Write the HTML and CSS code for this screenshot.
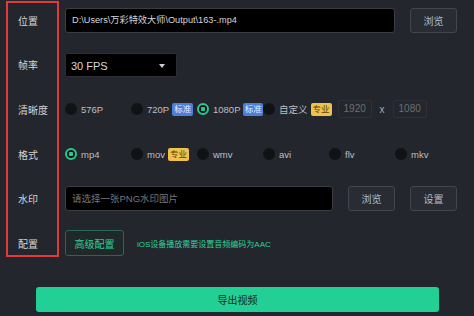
FILE: index.html
```html
<!doctype html>
<html lang="zh">
<head>
  <meta charset="utf-8">
  <title>导出视频</title>
<link rel="stylesheet" href="styles.css">
</head>

<body>

<div id="panel">

  <div class="mark"></div>

  <div id="form">

    <div class="row">
      <div class="label">位置</div>
      <div class="input path">D:\Users\万彩特效大师\Output\163-.mp4</div>
      <button class="btn">浏览</button>
    </div>

    <div class="row">
      <div class="label">帧率</div>
      <div class="select">30 FPS <span class="caret"></span></div>
    </div>

    <div class="row">
      <div class="label">清晰度</div>
      <div class="opt"><span class="radio"></span>576P</div>
      <div class="opt"><span class="radio"></span>720P <span class="tag blue">标准</span></div>
      <div class="opt"><span class="radio on"></span>1080P <span class="tag blue">标准</span></div>
      <div class="opt custom"><span class="radio"></span>自定义 <span class="tag gold">专业</span></div>
      <div class="size">1920</div>
      <span class="times">x</span>
      <div class="size">1080</div>
    </div>

    <div class="row">
      <div class="label">格式</div>
      <div class="opt"><span class="radio on"></span>mp4</div>
      <div class="opt"><span class="radio"></span>mov <span class="tag gold">专业</span></div>
      <div class="opt"><span class="radio"></span>wmv</div>
      <div class="opt"><span class="radio"></span>avi</div>
      <div class="opt"><span class="radio"></span>flv</div>
      <div class="opt"><span class="radio"></span>mkv</div>
    </div>

    <div class="row">
      <div class="label">水印</div>
      <div class="input wm placeholder">请选择一张PNG水印图片</div>
      <button class="btn">浏览</button>
      <button class="btn">设置</button>
    </div>

    <div class="row">
      <div class="label">配置</div>
      <button class="btn-adv">高级配置</button>
      <span class="note">iOS设备播放需要设置音频编码为AAC</span>
    </div>

  </div><!-- /#form -->

  <button class="export">导出视频</button>

</div>

</body>
</html>
```

FILE: styles.css
```css
html {
  box-sizing: border-box;
}
*, *:before, *:after {
  box-sizing: inherit;
}

body {
  margin: 0;
  padding: 0;
  width: 474px;
  height: 316px;
  overflow: hidden;
  background-color: #24262d;
  color: #bdbec2;
  font-family: 'Liberation Sans', 'Noto Sans CJK SC', sans-serif;
  font-size: 10px;
}

#panel {
  position: relative;
  height: 316px;
  padding: 0 17px 0 6px;
}

/* red annotation frame over the label column */
.mark {
  position: absolute;
  left: 6px;
  top: 3px;
  width: 53px;
  height: 256px;
  border: 2px solid #e03a3b;
  pointer-events: none;
}

#form {
  margin-top: -2px;
}

.row {
  display: flex;
  align-items: center;
  height: 44.6px;
}

.label {
  width: 59px;
  flex: none;
  padding-left: 12px;
  color: #d2d3d7;
  font-size: 10px;
}

.input {
  height: 25px;
  line-height: 23px;
  padding: 0 6px;
  background-color: #000;
  border: 1px solid #3b3d43;
  border-radius: 3px;
  color: #d6d6d8;
  white-space: nowrap;
  overflow: hidden;
}

.input.path {
  width: 330px;
  font-size: 9.2px;
}

.input.wm {
  width: 268px;
  font-size: 9.5px;
}

.placeholder {
  color: #76777c;
}

.btn {
  width: 47px;
  height: 25px;
  margin-left: 15px;
  padding: 0;
  background-color: #2a2c33;
  border: 1px solid #44464d;
  border-radius: 3px;
  color: #b9babe;
  font-family: inherit;
  font-size: 10px;
}

.select {
  position: relative;
  width: 112px;
  height: 24px;
  line-height: 24px;
  padding-left: 5px;
  background-color: #000;
  border: 1px solid #2c2e33;
  border-radius: 2px;
  color: #d8d9db;
  font-size: 11px;
}

.caret {
  position: absolute;
  right: 11px;
  top: 10px;
  width: 0;
  height: 0;
  border-left: 3px solid transparent;
  border-right: 3px solid transparent;
  border-top: 4px solid #cfd0d3;
}

.opt {
  width: 66px;
  flex: none;
  display: flex;
  align-items: center;
  white-space: nowrap;
  color: #bdbec2;
  font-size: 9.5px;
}

.opt.custom {
  width: auto;
}

.radio {
  width: 12px;
  height: 12px;
  flex: none;
  margin-right: 4px;
  border-radius: 50%;
  background-color: #111216;
}

.radio.on {
  border: 2px solid #27c98f;
  background: radial-gradient(circle, #27c98f 0, #27c98f 2px, #14171b 2.5px);
}

.tag {
  display: inline-block;
  width: 21px;
  height: 13px;
  line-height: 13px;
  margin-left: 3px;
  border-radius: 2px;
  text-align: center;
  font-size: 8.5px;
}

.tag.blue {
  background-color: #4d7ed8;
  color: #e2ebff;
}

.tag.gold {
  background-color: #f0c14f;
  color: #5e4100;
}

.size {
  width: 34px;
  height: 18px;
  line-height: 16px;
  margin-left: 6px;
  padding-left: 5px;
  border: 1px solid #2f3138;
  border-radius: 2px;
  color: #6c6e73;
  font-size: 10px;
}

.times {
  width: 21px;
  text-align: center;
  color: #a9aaae;
  font-size: 10px;
}

.times + .size {
  margin-left: 0;
}

.btn-adv {
  width: 59px;
  height: 26px;
  padding: 0;
  background-color: #20292a;
  border: 1px solid #2b6553;
  border-radius: 3px;
  color: #2fd098;
  font-family: inherit;
  font-size: 10px;
}

.note {
  margin-left: 13px;
  color: #2fd098;
  font-size: 8px;
}

.export {
  display: block;
  width: 403px;
  height: 25px;
  margin: 21px 0 0 30px;
  padding: 0;
  background-color: #22cf94;
  border: none;
  border-radius: 3px;
  color: #17241f;
  font-family: inherit;
  font-size: 10px;
}
```
